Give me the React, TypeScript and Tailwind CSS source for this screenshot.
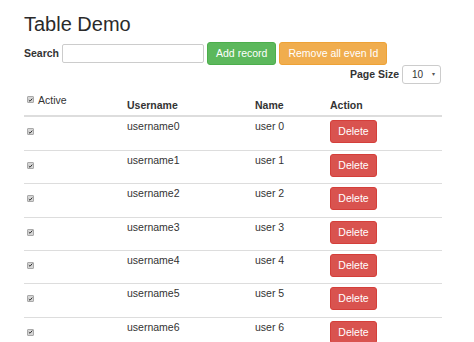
const rows = Array.from({ length: 7 }, (_, i) => ({
  username: `username${i}`,
  name: `user ${i}`,
}));

function Tick() {
  return (
    <span className="flex h-[7px] w-[7px] items-center justify-center rounded-[1px] border border-[#a9a9a9] bg-[#d6d6d6]">
      <svg viewBox="0 0 8 8" className="h-[6px] w-[6px]">
        <path d="M1.3 4.2 L3.2 6 L6.8 1.8" fill="none" stroke="#333" strokeWidth="1.6" />
      </svg>
    </span>
  );
}

export default function App() {
  return (
    <div className="min-h-[342px] w-[474px] bg-white pl-[24px] font-['Liberation_Sans',Arial,sans-serif] text-[10.5px] leading-[15px] text-[#333]">
      {/* Title */}
      <h2 className="pt-[13px] text-[20px] leading-[22px] text-[#2a2a2a]">Table Demo</h2>

      {/* Search + actions */}
      <div className="mt-[7px] flex h-[23px] items-center gap-[3px]">
        <label className="font-bold">Search</label>
        <input className="h-[19px] w-[142px] rounded-[2px] border border-[#ccc] bg-white px-1 text-[10.5px] outline-none" />
        <button className="h-[23px] rounded-[3px] border border-[#4cae4c] bg-[#5cb85c] px-[8px] text-white">
          Add record
        </button>
        <button className="h-[23px] rounded-[3px] border border-[#eea236] bg-[#f0ad4e] px-[8px] text-white">
          Remove all even Id
        </button>
      </div>

      {/* Page size */}
      <div className="flex w-[417px] items-center justify-end gap-[3px]">
        <span className="font-bold">Page Size</span>
        <div className="flex h-[19px] w-[39px] items-center justify-between rounded-[3px] border border-[#ccc] pl-[9px] pr-[5px] text-[10px]">
          <span>10</span>
          <span className="text-[6px] text-[#555]">▾</span>
        </div>
      </div>

      {/* Table */}
      <div className="w-[418px]">
        <div className="grid h-[33px] grid-cols-[103px_128px_75px_112px] border-b-2 border-[#ddd] font-bold">
          <div className="flex items-start gap-[4px] pl-[3px] pt-[9px] font-normal">
            <span className="mt-[3px]">
              <Tick />
            </span>
            <span>Active</span>
          </div>
          <div className="flex items-end pb-[2px]">Username</div>
          <div className="flex items-end pb-[2px]">Name</div>
          <div className="flex items-end pb-[2px]">Action</div>
        </div>
        {rows.map((r, i) => (
          <div
            key={r.username}
            className={`grid grid-cols-[103px_128px_75px_112px] ${
              i === 0 ? "h-[33px]" : "h-[33.33px] border-t border-[#ddd]"
            }`}
          >
            <div className="pl-[3px] pt-[11px]">
              <Tick />
            </div>
            <div className="pt-[2px]">{r.username}</div>
            <div className="pt-[2px]">{r.name}</div>
            <div className="pt-[3px]">
              <button className="h-[23px] w-[47px] rounded-[3px] border border-[#d43f3a] bg-[#d9534f] text-white">
                Delete
              </button>
            </div>
          </div>
        ))}
      </div>
    </div>
  );
}
